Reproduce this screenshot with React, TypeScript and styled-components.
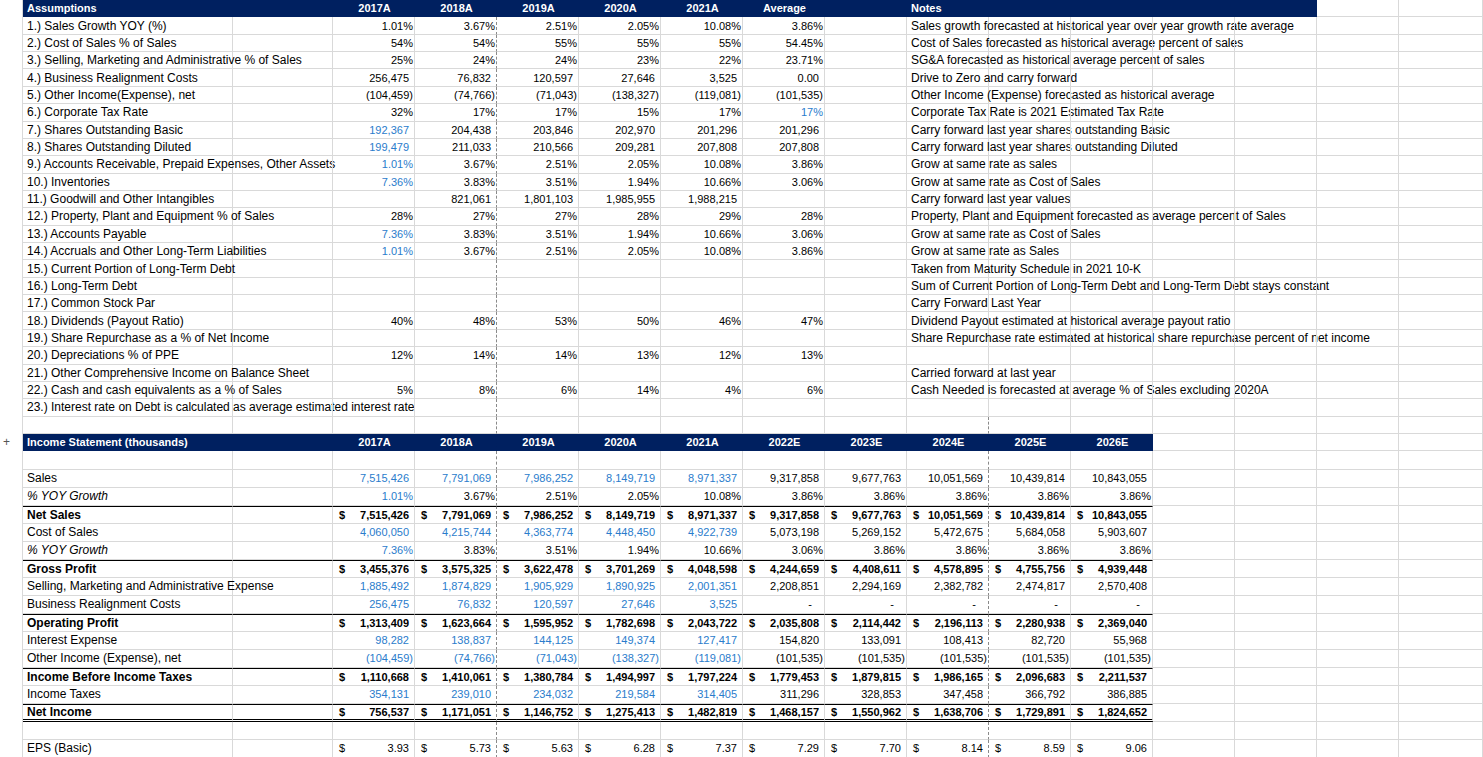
import React from "react";
import styled, { createGlobalStyle, css } from "styled-components";

const Global = createGlobalStyle`
  body { margin: 0; background: #fff; }
  * { box-sizing: border-box; }
`;

const NAVY = "#002060";
const BLUE = "#2a7ccc";
const GRID = "#d9d9d9";
const COLW = 82;
const EXTRA = 14;

const Sheet = styled.div`
  font-family: "Liberation Sans", Arial, sans-serif;
  font-size: 11px;
  color: #000;
  width: 1483px;
  overflow: hidden;
`;

const Row = styled.div<{ $h: number }>`
  display: flex;
  height: ${(p) => p.$h}px;
  position: relative;
`;

const Gutter = styled.div`
  width: 23px;
  flex: none;
  border-right: 1px solid ${GRID};
  font-size: 12px;
  color: #555;
  display: flex;
  align-items: center;
  padding-left: 3px;
`;

const Cell = styled.div<{
  $w: number;
  $head?: boolean;
  $align?: "left" | "right" | "center";
  $bold?: boolean;
  $blue?: boolean;
  $italic?: boolean;
  $pad?: number;
  $dash?: boolean;
  $top?: boolean;
  $double?: boolean;
  $text?: boolean;
}>`
  width: ${(p) => p.$w}px;
  flex: none;
  display: flex;
  align-items: center;
  justify-content: ${(p) => (p.$align === "right" ? "flex-end" : p.$align === "center" ? "center" : "flex-start")};
  white-space: nowrap;
  overflow: visible;
  padding: 0 ${(p) => p.$pad ?? 2}px 0 4px;
  font-size: ${(p) => (p.$text ? "12px" : "11px")};
  border-right: 1px ${(p) => (p.$dash ? "dashed #8a8a8a" : `solid ${GRID}`)};
  border-bottom: 1px solid ${GRID};
  font-weight: ${(p) => (p.$bold ? 700 : 400)};
  font-style: ${(p) => (p.$italic ? "italic" : "normal")};
  color: ${(p) => (p.$blue ? BLUE : "#000")};
  ${(p) => p.$top && css`border-top: 1px solid #000;`}
  ${(p) => p.$double && css`border-bottom: 3px double #000;`}
  ${(p) =>
    p.$head &&
    css`
      background: ${NAVY};
      color: #fff;
      font-weight: 700;
      border-right-color: ${NAVY};
      border-bottom-color: ${NAVY};
    `}
`;

const Dollar = styled.span`
  margin-right: auto;
  padding-left: 2px;
`;

type Top = { label: string; v: string[]; note?: string; blue?: number[] };

const tops: Top[] = [
  { label: "1.) Sales Growth YOY (%)", v: ["1.01%", "3.67%", "2.51%", "2.05%", "10.08%", "3.86%"], note: "Sales growth forecasted at historical year over year growth rate average" },
  { label: "2.) Cost of Sales % of Sales", v: ["54%", "54%", "55%", "55%", "55%", "54.45%"], note: "Cost of Sales forecasted as historical average percent of sales" },
  { label: "3.) Selling, Marketing and Administrative % of Sales", v: ["25%", "24%", "24%", "23%", "22%", "23.71%"], note: "SG&A forecasted as historical average percent of sales" },
  { label: "4.) Business Realignment Costs", v: ["256,475", "76,832", "120,597", "27,646", "3,525", "0.00"], note: "Drive to Zero and carry forward" },
  { label: "5.) Other Income(Expense), net", v: ["(104,459)", "(74,766)", "(71,043)", "(138,327)", "(119,081)", "(101,535)"], note: "Other Income (Expense) forecasted as historical average" },
  { label: "6.) Corporate Tax Rate", v: ["32%", "17%", "17%", "15%", "17%", "17%"], note: "Corporate Tax Rate is 2021 Estimated Tax Rate", blue: [5] },
  { label: "7.) Shares Outstanding Basic", v: ["192,367", "204,438", "203,846", "202,970", "201,296", "201,296"], note: "Carry forward last year shares outstanding Basic", blue: [0] },
  { label: "8.) Shares Outstanding Diluted", v: ["199,479", "211,033", "210,566", "209,281", "207,808", "207,808"], note: "Carry forward last year shares outstanding Diluted", blue: [0] },
  { label: "9.) Accounts Receivable, Prepaid Expenses, Other Assets", v: ["1.01%", "3.67%", "2.51%", "2.05%", "10.08%", "3.86%"], note: "Grow at same rate as sales", blue: [0] },
  { label: "10.) Inventories", v: ["7.36%", "3.83%", "3.51%", "1.94%", "10.66%", "3.06%"], note: "Grow at same rate as Cost of Sales", blue: [0] },
  { label: "11.) Goodwill and Other Intangibles", v: ["", "821,061", "1,801,103", "1,985,955", "1,988,215", ""], note: "Carry forward last year values" },
  { label: "12.) Property, Plant and Equipment % of Sales", v: ["28%", "27%", "27%", "28%", "29%", "28%"], note: "Property, Plant and Equipment forecasted as average percent of Sales" },
  { label: "13.) Accounts Payable", v: ["7.36%", "3.83%", "3.51%", "1.94%", "10.66%", "3.06%"], note: "Grow at same rate as Cost of Sales", blue: [0] },
  { label: "14.) Accruals and Other Long-Term Liabilities", v: ["1.01%", "3.67%", "2.51%", "2.05%", "10.08%", "3.86%"], note: "Grow at same rate as Sales", blue: [0] },
  { label: "15.) Current Portion of Long-Term Debt", v: [], note: "Taken from Maturity Schedule in 2021 10-K" },
  { label: "16.) Long-Term Debt", v: [], note: "Sum of Current Portion of Long-Term Debt and Long-Term Debt stays constant" },
  { label: "17.) Common Stock Par", v: [], note: "Carry Forward Last Year" },
  { label: "18.) Dividends (Payout Ratio)", v: ["40%", "48%", "53%", "50%", "46%", "47%"], note: "Dividend Payout estimated at historical average payout ratio" },
  { label: "19.) Share Repurchase as a % of Net Income", v: [], note: "Share Repurchase rate estimated at historical share repurchase percent of net income" },
  { label: "20.) Depreciations % of PPE", v: ["12%", "14%", "14%", "13%", "12%", "13%"] },
  { label: "21.) Other Comprehensive Income on Balance Sheet", v: [], note: "Carried forward at last year" },
  { label: "22.) Cash and cash equivalents as a % of Sales", v: ["5%", "8%", "6%", "14%", "4%", "6%"], note: "Cash Needed is forecasted at average % of Sales excluding 2020A" },
  { label: "23.) Interest rate on Debt is calculated as average estimated interest rate", v: [] },
];

type Inc = {
  label: string;
  v: string[];
  bold?: boolean;
  italic?: boolean;
  dollar?: boolean;
  blueUpTo?: number;
  top?: boolean;
  double?: boolean;
};

const rep = (s: string, n: number) => Array(n).fill(s);

const inc: Inc[] = [
  { label: "Sales", v: ["7,515,426", "7,791,069", "7,986,252", "8,149,719", "8,971,337", "9,317,858", "9,677,763", "10,051,569", "10,439,814", "10,843,055"], blueUpTo: 5 },
  { label: "% YOY Growth", italic: true, v: ["1.01%", "3.67%", "2.51%", "2.05%", "10.08%", ...rep("3.86%", 5)], blueUpTo: 1 },
  { label: "Net Sales", bold: true, dollar: true, top: true, v: ["7,515,426", "7,791,069", "7,986,252", "8,149,719", "8,971,337", "9,317,858", "9,677,763", "10,051,569", "10,439,814", "10,843,055"] },
  { label: "Cost of Sales", v: ["4,060,050", "4,215,744", "4,363,774", "4,448,450", "4,922,739", "5,073,198", "5,269,152", "5,472,675", "5,684,058", "5,903,607"], blueUpTo: 5 },
  { label: "% YOY Growth", italic: true, v: ["7.36%", "3.83%", "3.51%", "1.94%", "10.66%", "3.06%", ...rep("3.86%", 4)], blueUpTo: 1 },
  { label: "Gross Profit", bold: true, dollar: true, top: true, v: ["3,455,376", "3,575,325", "3,622,478", "3,701,269", "4,048,598", "4,244,659", "4,408,611", "4,578,895", "4,755,756", "4,939,448"] },
  { label: "Selling, Marketing and Administrative Expense", v: ["1,885,492", "1,874,829", "1,905,929", "1,890,925", "2,001,351", "2,208,851", "2,294,169", "2,382,782", "2,474,817", "2,570,408"], blueUpTo: 5 },
  { label: "Business Realignment Costs", v: ["256,475", "76,832", "120,597", "27,646", "3,525", ...rep("-", 5)], blueUpTo: 5 },
  { label: "Operating Profit", bold: true, dollar: true, top: true, v: ["1,313,409", "1,623,664", "1,595,952", "1,782,698", "2,043,722", "2,035,808", "2,114,442", "2,196,113", "2,280,938", "2,369,040"] },
  { label: "Interest Expense", v: ["98,282", "138,837", "144,125", "149,374", "127,417", "154,820", "133,091", "108,413", "82,720", "55,968"], blueUpTo: 5 },
  { label: "Other Income (Expense), net", v: ["(104,459)", "(74,766)", "(71,043)", "(138,327)", "(119,081)", ...rep("(101,535)", 5)], blueUpTo: 5 },
  { label: "Income Before Income Taxes", bold: true, dollar: true, top: true, v: ["1,110,668", "1,410,061", "1,380,784", "1,494,997", "1,797,224", "1,779,453", "1,879,815", "1,986,165", "2,096,683", "2,211,537"] },
  { label: "Income Taxes", v: ["354,131", "239,010", "234,032", "219,584", "314,405", "311,296", "328,853", "347,458", "366,792", "386,885"], blueUpTo: 5 },
  { label: "Net Income", bold: true, dollar: true, top: true, double: true, v: ["756,537", "1,171,051", "1,146,752", "1,275,413", "1,482,819", "1,468,157", "1,550,962", "1,638,706", "1,729,891", "1,824,652"] },
];

const eps = ["3.93", "5.73", "5.63", "6.28", "7.37", "7.29", "7.70", "8.14", "8.59", "9.06"];

// right padding like Excel accounting formats: positive numbers leave room for ")"
const padFor = (v: string) => (v.includes("(") || v.includes("%") ? 1 : v === "-" ? 12 : 5);

const dashAt = (i: number) => i === 1 || i === 7;

function Extras({ from, head }: { from: number; head?: number }) {
  return (
    <>
      {Array.from({ length: EXTRA - from }).map((_, k) => {
        const i = from + k;
        return <Cell key={i} $w={i === EXTRA - 1 ? 1483 - 333 - COLW * (EXTRA - 1) : COLW} $dash={dashAt(i)} $head={head !== undefined && i < head} />;
      })}
    </>
  );
}

const topYears = ["2017A", "2018A", "2019A", "2020A", "2021A", "Average"];
const incYears = ["2017A", "2018A", "2019A", "2020A", "2021A", "2022E", "2023E", "2024E", "2025E", "2026E"];

export default function App() {
  const TH = 17.36;
  return (
    <Sheet>
      <Global />
      <Row $h={TH}>
        <Gutter />
        <Cell $w={210} $head>Assumptions</Cell>
        <Cell $w={100} $head />
        {topYears.map((y, i) => (
          <Cell key={y} $w={COLW} $head $align="center" $dash={dashAt(i)}>{y}</Cell>
        ))}
        <Cell $w={COLW} $head />
        <Cell $w={COLW} $head>Notes</Cell>
        <Extras from={8} head={12} />
      </Row>
      {tops.map((r, ri) => (
        <Row key={ri} $h={TH}>
          <Gutter />
          <Cell $w={210} $text>{r.label}</Cell>
          <Cell $w={100} />
          {Array.from({ length: 6 }).map((_, i) => {
            const v = r.v[i] ?? "";
            return (
              <Cell key={i} $w={COLW} $align="right" $pad={padFor(v)} $dash={dashAt(i)} $blue={r.blue?.includes(i)}>{v}</Cell>
            );
          })}
          <Cell $w={COLW} />
          <Cell $w={COLW} $text>{r.note}</Cell>
          <Extras from={8} />
        </Row>
      ))}
      <Row $h={TH}>
        <Gutter />
        <Cell $w={210} />
        <Cell $w={100} />
        <Extras from={0} />
      </Row>
      <Row $h={17}>
        <Gutter>+</Gutter>
        <Cell $w={210} $head>Income Statement (thousands)</Cell>
        <Cell $w={100} $head />
        {incYears.map((y, i) => (
          <Cell key={y} $w={COLW} $head $align="center" $dash={dashAt(i)}>{y}</Cell>
        ))}
        <Extras from={10} />
      </Row>
      <Row $h={19}>
        <Gutter />
        <Cell $w={210} />
        <Cell $w={100} />
        <Extras from={0} />
      </Row>
      {inc.map((r, ri) => (
        <Row key={ri} $h={18}>
          <Gutter />
          <Cell $w={210} $text $bold={r.bold} $italic={r.italic} $top={r.top} $double={r.double}>{r.label}</Cell>
          <Cell $w={100} $top={r.top} $double={r.double} />
          {r.v.map((v, i) => (
            <Cell
              key={i}
              $w={COLW}
              $align="right"
              $pad={padFor(v)}
              $bold={r.bold}
              $dash={dashAt(i)}
              $blue={r.blueUpTo !== undefined && i < r.blueUpTo}
              $top={r.top}
              $double={r.double}
            >
              {r.dollar && <Dollar>$</Dollar>}
              {v}
            </Cell>
          ))}
          <Extras from={10} />
        </Row>
      ))}
      <Row $h={18}>
        <Gutter />
        <Cell $w={210} />
        <Cell $w={100} />
        <Extras from={0} />
      </Row>
      <Row $h={18}>
        <Gutter />
        <Cell $w={210} $text>EPS (Basic)</Cell>
        <Cell $w={100} />
        {eps.map((v, i) => (
          <Cell key={i} $w={COLW} $align="right" $pad={5} $dash={dashAt(i)}>
            <Dollar>$</Dollar>
            {v}
          </Cell>
        ))}
        <Extras from={10} />
      </Row>
    </Sheet>
  );
}
